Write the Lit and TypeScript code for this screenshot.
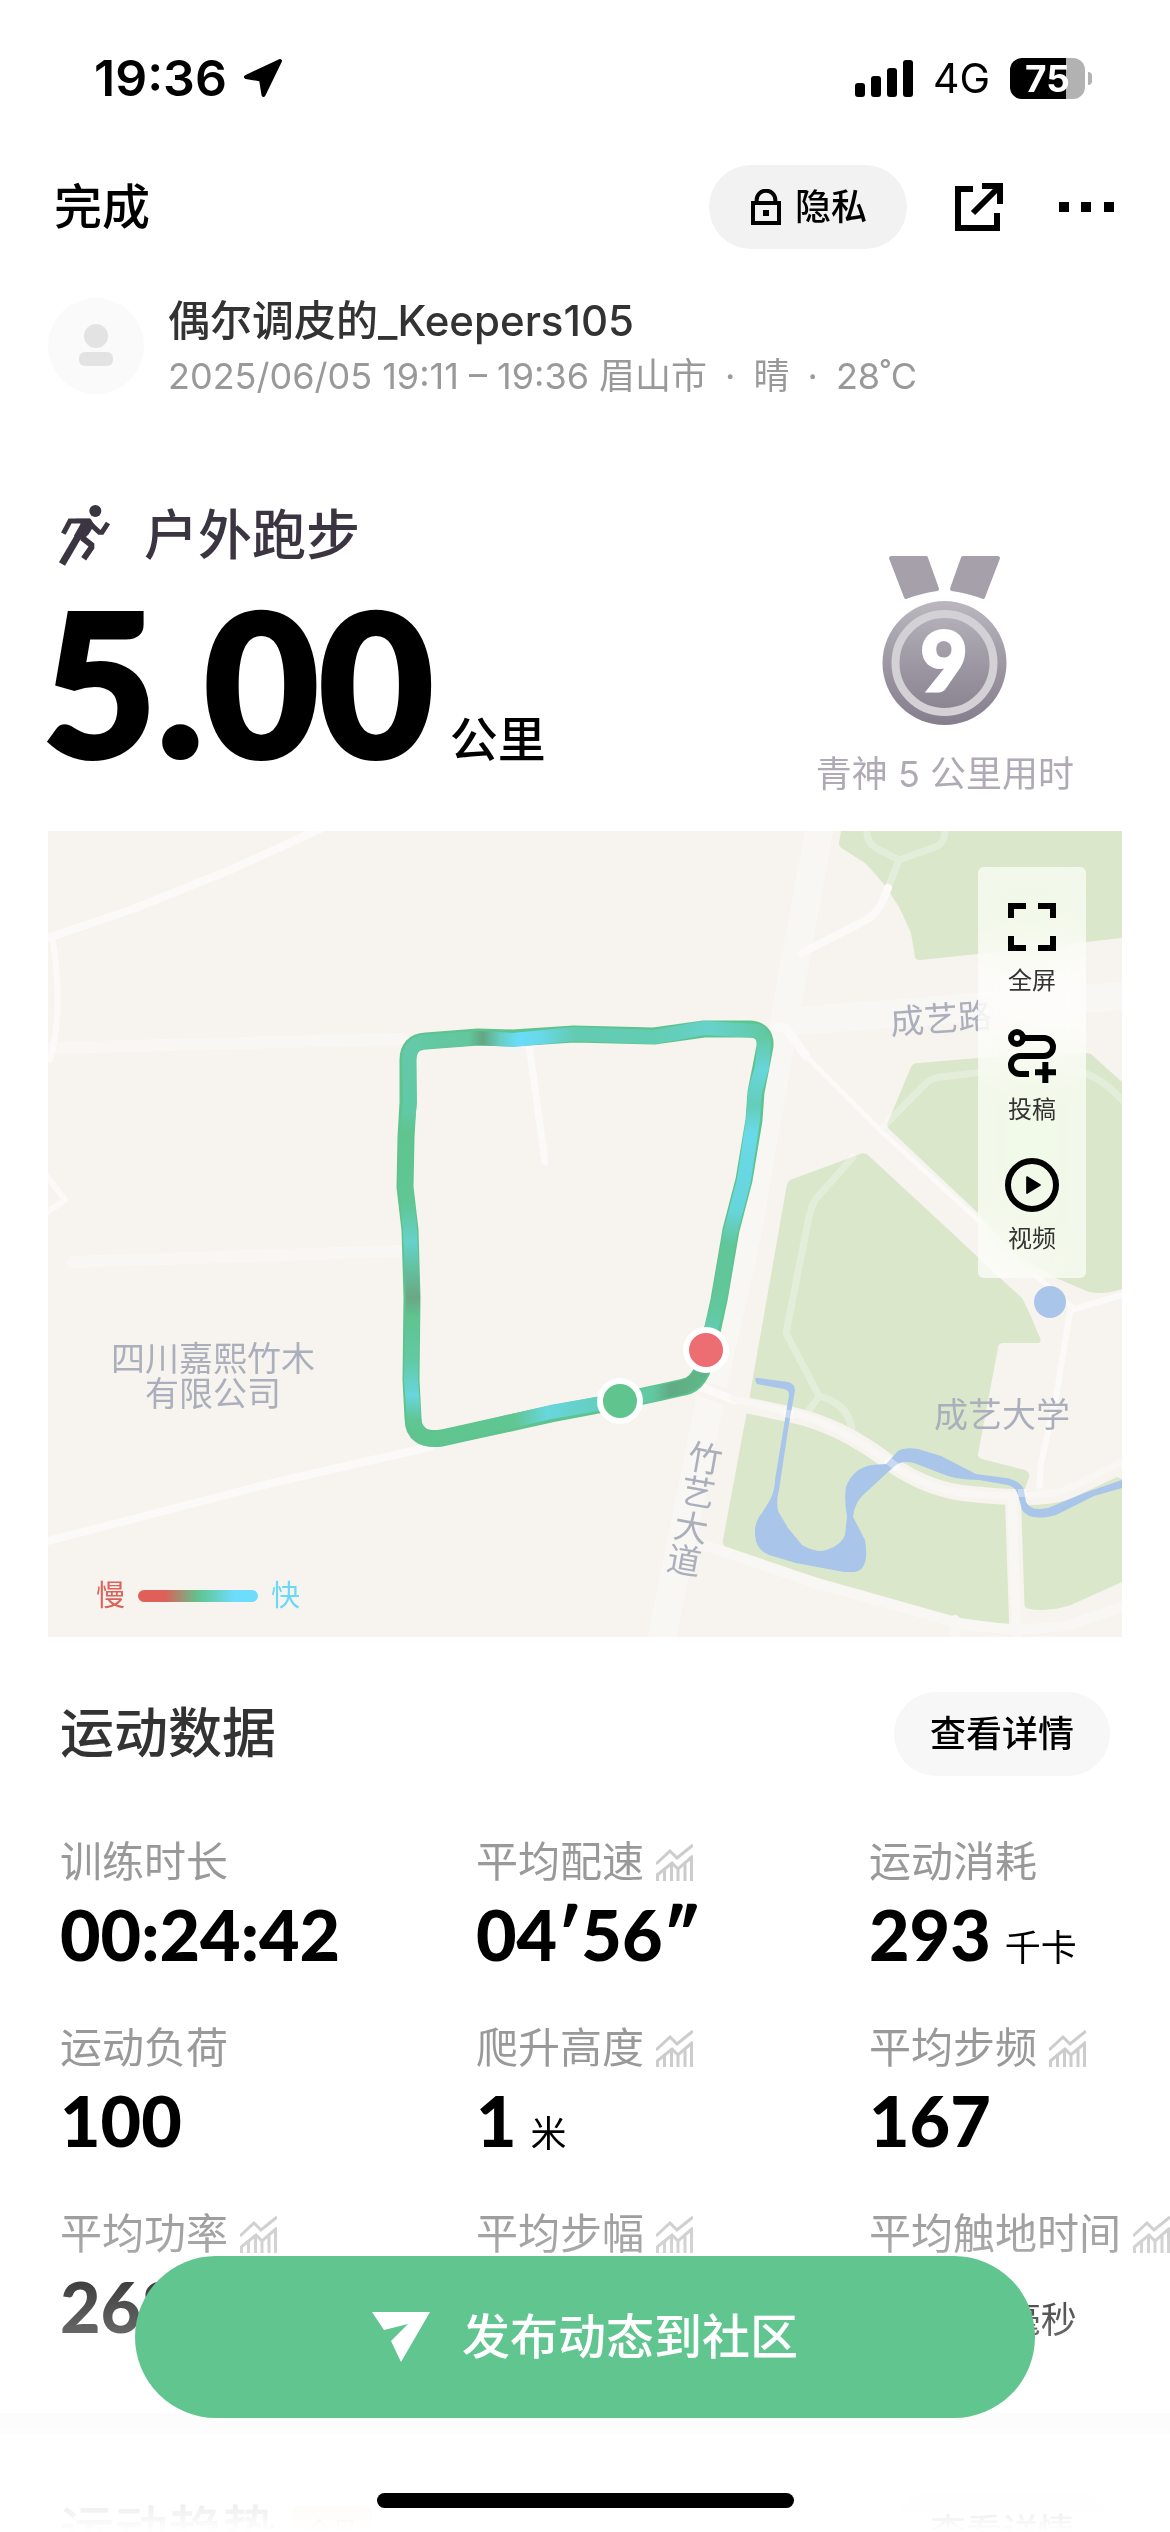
import { LitElement, html, css, svg, nothing } from "lit";
import { customElement } from "lit/decorators.js";

interface Stat {
  label: string;
  value: string;
  unit?: string;
  chart?: boolean;
}

const STATS: Stat[] = [
  { label: "训练时长", value: "00:24:42" },
  { label: "平均配速", value: "04′56″", chart: true },
  { label: "运动消耗", value: "293", unit: "千卡" },
  { label: "运动负荷", value: "100" },
  { label: "爬升高度", value: "1", unit: "米", chart: true },
  { label: "平均步频", value: "167", chart: true },
  { label: "平均功率", value: "268", unit: "瓦", chart: true },
  { label: "平均步幅", value: "1.21", unit: "米", chart: true },
  { label: "平均触地时间", value: "243", unit: "毫秒", chart: true },
];

/* Route map: terrain, roads, water, place names and the coloured track. */
@customElement("route-map")
class RouteMap extends LitElement {
  static styles = css`
    :host {
      display: block;
    }
    .map {
      display: block;
      width: 100%;
      height: auto;
      background: #f7f4ef;
    }
    .green {
      fill: #dae7cb;
    }
    .water {
      fill: #a9c5ea;
    }
    .road,
    .faint,
    .cut,
    .path,
    .track {
      fill: none;
      stroke-linejoin: round;
      stroke-linecap: round;
    }
    .road {
      stroke: #fbfaf8;
    }
    .faint {
      stroke: #f9f7f4;
    }
    .cut {
      stroke: #f7f4ef;
    }
    .path {
      stroke: #ffffff;
      stroke-opacity: 0.28;
      stroke-width: 7px;
    }
    .edge {
      fill: none;
      stroke: #5fc38f;
      stroke-width: 17px;
      stroke-linejoin: round;
      stroke-linecap: round;
    }
    .track {
      stroke-width: 14px;
    }
    .place {
      font-family: "Noto Sans CJK SC", sans-serif;
      font-size: 34px;
      fill: #abafbb;
      text-anchor: middle;
    }
    .pin {
      stroke: #ffffff;
      stroke-width: 6px;
    }
  `;

  render() {
    return html`
      <svg class="map" viewBox="48 831 1074 806" role="img" aria-label="跑步路线地图">
        <defs>
          <linearGradient id="gt" gradientUnits="userSpaceOnUse" x1="408" y1="0" x2="764" y2="0">
            <stop offset="0" stop-color="#63c9a8" />
            <stop offset="0.17" stop-color="#62c79c" />
            <stop offset="0.21" stop-color="#63a783" />
            <stop offset="0.26" stop-color="#66cfc4" />
            <stop offset="0.31" stop-color="#6adcfa" />
            <stop offset="0.37" stop-color="#69d8ea" />
            <stop offset="0.47" stop-color="#63cbb0" />
            <stop offset="0.7" stop-color="#63cdb4" />
            <stop offset="0.85" stop-color="#67d2cc" />
            <stop offset="1" stop-color="#62c9a4" />
          </linearGradient>
          <linearGradient id="gr" gradientUnits="userSpaceOnUse" x1="0" y1="1035" x2="0" y2="1385">
            <stop offset="0" stop-color="#62c8a0" />
            <stop offset="0.1" stop-color="#68d6da" />
            <stop offset="0.2" stop-color="#64cdb9" />
            <stop offset="0.28" stop-color="#69dae8" />
            <stop offset="0.5" stop-color="#67d5dc" />
            <stop offset="0.6" stop-color="#61c698" />
            <stop offset="0.78" stop-color="#61c79c" />
            <stop offset="0.85" stop-color="#63cdb6" />
            <stop offset="1" stop-color="#60ad86" />
          </linearGradient>
          <linearGradient id="gb" gradientUnits="userSpaceOnUse" x1="411" y1="0" x2="706" y2="0">
            <stop offset="0" stop-color="#5fc48e" />
            <stop offset="0.35" stop-color="#60c692" />
            <stop offset="0.46" stop-color="#68d6dc" />
            <stop offset="0.62" stop-color="#65cfc2" />
            <stop offset="0.82" stop-color="#62c8a0" />
            <stop offset="0.88" stop-color="#60ab84" />
            <stop offset="1" stop-color="#60b88a" />
          </linearGradient>
          <linearGradient id="gl" gradientUnits="userSpaceOnUse" x1="0" y1="1045" x2="0" y2="1439">
            <stop offset="0" stop-color="#63c9a8" />
            <stop offset="0.17" stop-color="#62c9a6" />
            <stop offset="0.22" stop-color="#5fc48e" />
            <stop offset="0.4" stop-color="#60c694" />
            <stop offset="0.5" stop-color="#66d2ca" />
            <stop offset="0.57" stop-color="#63c0a0" />
            <stop offset="0.64" stop-color="#6aa785" />
            <stop offset="0.69" stop-color="#5fc490" />
            <stop offset="0.8" stop-color="#62c9a4" />
            <stop offset="0.89" stop-color="#68d6dc" />
            <stop offset="0.95" stop-color="#60c694" />
            <stop offset="1" stop-color="#5fc48e" />
          </linearGradient>
        </defs>

        <path
          class="green"
          d="M841 831L839 843Q839 847 843 849L865 863Q877 875 886 887L899 907L911 933L915 957Q916 960 920 960L978 954L1122 938V831Z"
        />
        <path
          class="green"
          d="M911 1067Q913 1063 918 1063L978 1058L1087 1053L1091 1054L1122 1082V1289Q1105 1295 1089 1292L1056 1278L1010 1250L978 1213L889 1129Q886 1126 888 1122Z"
        />
        <path
          class="green"
          d="M787 1184L790 1180L860 1154Q865 1152 869 1156L949 1230L1000 1278L1022 1298L1030 1314L1040 1338Q1042 1343 1037 1343H1002Q998 1344 998 1348L978 1454Q978 1458 982 1459L1025 1470Q1030 1472 1029 1477L1021 1500L1034 1500Q1062 1499 1090 1487L1117 1477L1122 1479V1582L1071 1605Q1050 1612 1029 1609Q1024 1608 1024 1604L1011 1612V1620Q1011 1625 1005 1624L960 1618L815 1577L727 1547Q722 1546 723 1540L749 1400Z"
        />

        <path class="faint" stroke-width="28" d="M819 831L784 1022L746 1240L712 1390L662 1637" />
        <path class="faint" stroke-width="28" d="M784 1022L978 1007L1122 996" />
        <path class="faint" stroke-width="12" d="M50 1048L402 1039" />
        <path class="faint" stroke-width="12" d="M73 1262L400 1251" />
        <path class="road" stroke-width="8" d="M48 938L133 909L230 870L320 829" />
        <path class="road" stroke-width="6" d="M52 935Q64 1010 50 1060M46 1175L65 1200L46 1213" />
        <path class="road" stroke-width="8" d="M48 1541L133 1519L276 1482L430 1447" />
        <path class="road" stroke-width="7" d="M529 1045L545 1162" />
        <path class="road" stroke-width="8" d="M802 953L868 919Q880 910 884 898L888 888" />
        <path class="path" d="M888 888L899 860L876 848Q866 842 867 831M899 860L938 846Q945 841 945 831" />
        <path class="road" stroke-width="9" d="M776 1027L786 1028L806 1056" />
        <path class="road" stroke-width="5" d="M806 1056L880 1130L978 1220L1020 1262L1071 1306" />
        <path class="path" d="M884 1126L926 1083Q932 1078 941 1077L1000 1070Q1060 1066 1087 1074Q1106 1082 1122 1100" />
        <path class="path" d="M853 1157L815 1200Q810 1210 808 1222L786 1333L819 1396L806 1415M819 1396Q850 1404 852 1432" />
        <path class="road" stroke-width="6" d="M1071 1310L1122 1295M1071 1306L1056 1397L1041 1463L1039 1493" />
        <path
          class="cut"
          stroke-width="16"
          d="M700 1388L723 1396L750 1406L788 1414Q840 1424 891 1464Q930 1491 972 1494Q1045 1502 1070 1490L1122 1466"
        />
        <path class="cut" stroke-width="16" d="M1013 1500L1018 1650" />
        <path class="road" stroke-width="8" d="M696 1385L734 1400" />
        <path class="faint" stroke-width="9" d="M1012 1500L1017 1640" />
        <path
          class="faint"
          stroke-width="7"
          d="M734 1399L788 1412Q840 1424 891 1464Q930 1491 972 1494Q1045 1500 1070 1488L1122 1462"
        />
        <path class="faint" stroke-width="10" d="M704 1545L815 1583L957 1623Q1020 1634 1068 1625L1122 1607M955 1620V1640" />

        <path
          class="water"
          d="M755 1380Q755 1377 758 1378L788 1382Q795 1384 795 1390L788 1430L779 1490Q776 1500 778 1511L788 1528L802 1545Q812 1551 822 1551Q840 1547 845 1535L847 1517Q844 1500 846 1487Q853 1468 872 1465L886 1464L898 1451Q905 1447 918 1449L941 1456L976 1474L1006 1478Q1021 1481 1024 1490L1026 1502Q1031 1510 1040 1509L1048 1508L1087 1492L1122 1480V1488L1094 1496L1056 1515Q1030 1522 1022 1510L1018 1495Q1016 1487 1008 1485L979 1480Q955 1480 940 1473L914 1463Q903 1460 896 1465L888 1472L862 1496Q854 1505 853 1517L865 1540Q870 1570 854 1572L844 1572L796 1563L769 1555Q756 1550 755 1535Q754 1522 762 1513L770 1500Q775 1490 775 1480L789 1395Q789 1390 784 1389L757 1384Z"
        />
        <circle class="water" cx="1050" cy="1302" r="16" />
        <path d="M784 1413L794 1415M886 1459L898 1468M1018 1493L1027 1493" stroke="#ffffff" stroke-opacity="0.35" stroke-width="8" />

        <text class="place" x="213" y="1371">四川嘉熙竹木</text>
        <text class="place" x="213" y="1406">有限公司</text>
        <text class="place" x="1002" y="1427">成艺大学</text>
        <text class="place" x="941" y="1031" transform="rotate(-4 941 1019)">成艺路</text>
        ${[
          ["竹", 705, 1459],
          ["艺", 698, 1493],
          ["大", 691, 1528],
          ["道", 684, 1561],
        ].map(
          ([ch, x, y]) => svg`<text class="place" dy="12" transform="translate(${x} ${y}) rotate(10)">${ch}</text>`,
        )}

        <path
          class="edge"
          d="M408 1060Q408 1042 426 1041L478 1037L513 1038L574 1034L654 1036L704 1029L750 1029Q766 1030 765 1046L761 1067L756 1092L754 1120L744 1180L731 1230L719 1300L708 1350Q702 1384 684 1387L662 1392L620 1401L551 1414L478 1430L442 1438Q413 1442 413 1418L411 1380L412 1297L410 1230L405 1187L406 1137L408 1103Z"
        />
        <path class="track" stroke="url(#gl)" d="M422 1042Q409 1045 409 1060L410 1103L406 1137L406 1187L410 1230L413 1297L411 1380L414 1418Q415 1434 430 1438" />
        <path class="track" stroke="url(#gb)" d="M430 1438Q437 1439 446 1437L478 1429L551 1412L620 1400L662 1392L684 1387Q697 1382 702 1370" />
        <path class="track" stroke="url(#gr)" d="M757 1031Q765 1034 764 1046L762 1067L755 1092L753 1120L744 1180L730 1234L719 1300L708 1340L702 1370" />
        <path class="track" stroke="url(#gt)" d="M422 1042L478 1038L513 1040L574 1034L654 1037L704 1028L757 1031" />
        <circle class="pin" cx="706" cy="1350" r="20" fill="#ec6d72" />
        <circle class="pin" cx="620" cy="1401" r="20" fill="#5fc48e" />
      </svg>
    `;
  }
}

@customElement("app-root")
class AppRoot extends LitElement {
  static styles = css`
    :host {
      display: block;
      font-family: Inter, "Noto Sans CJK SC", sans-serif;
      color: #000000;
    }
    button {
      font: inherit;
      color: inherit;
      background: none;
      border: 0;
      padding: 0;
      margin: 0;
      cursor: pointer;
    }
    svg {
      display: block;
      flex: none;
    }
    .screen {
      position: relative;
      box-sizing: border-box;
      height: 100vh;
      overflow: hidden;
      background: #ffffff;
      padding-top: 48px;
    }
    .status {
      display: flex;
      align-items: center;
      justify-content: space-between;
      height: 60px;
      padding: 0 78px 0 94px;
    }
    .clock {
      display: flex;
      align-items: center;
      gap: 16px;
      font-size: 50px;
      line-height: 60px;
      font-weight: 600;
    }
    .signals {
      display: flex;
      align-items: center;
      gap: 20px;
      font-size: 41px;
      line-height: 60px;
    }
    .battery {
      display: flex;
      align-items: center;
      gap: 3px;
    }
    .cell {
      box-sizing: border-box;
      width: 75px;
      height: 41px;
      border-radius: 12px;
      background: linear-gradient(to right, #000000 75%, #b2b2b2 75%);
      color: #ffffff;
      font-size: 37px;
      line-height: 41px;
      font-weight: 700;
      text-align: center;
    }
    .nub {
      width: 4px;
      height: 13px;
      border-radius: 0 6px 6px 0;
      background: #b2b2b2;
    }
    .nav {
      display: flex;
      align-items: center;
      height: 84px;
      margin-top: 57px;
      padding: 0 56px 0 54px;
    }
    .done {
      margin-right: auto;
      font-size: 48px;
      line-height: 60px;
      font-weight: 500;
    }
    .pill {
      display: flex;
      align-items: center;
      height: 84px;
      border-radius: 42px;
      font-size: 36px;
      line-height: 48px;
      font-weight: 500;
    }
    .privacy {
      gap: 14px;
      padding: 0 40px 0 42px;
      background: #f2f2f2;
    }
    .share {
      margin-left: 48px;
    }
    .more {
      margin-left: 56px;
    }
    .profile {
      display: flex;
      align-items: center;
      gap: 24px;
      margin-top: 49px;
      padding: 0 48px;
      height: 96px;
    }
    .who {
      display: flex;
      flex-direction: column;
      padding-top: 4px;
    }
    .name {
      font-size: 42px;
      line-height: 56px;
      font-weight: 500;
      color: #333333;
    }
    .meta {
      display: flex;
      gap: 18px;
      font-size: 36px;
      line-height: 54px;
      color: #999999;
    }
    .summary {
      display: flex;
      justify-content: space-between;
      margin-top: 110px;
      padding: 0 48px;
      height: 327px;
    }
    .sport {
      display: flex;
      align-items: center;
      gap: 32px;
      margin: 0;
      padding-left: 9px;
      font-size: 54px;
      line-height: 60px;
      font-weight: 500;
      color: #3b3441;
    }
    .distance {
      display: flex;
      align-items: baseline;
      gap: 16px;
      margin: 0 0 0 -6px;
      font-size: 48px;
      font-weight: 500;
      line-height: 228px;
    }
    .km {
      font-family: Lato, sans-serif;
      font-size: 198px;
      font-weight: 900;
      -webkit-text-stroke: 4px #000000;
    }
    .award {
      display: flex;
      flex-direction: column;
      align-items: center;
      gap: 24px;
      padding: 52px 48px 0 0;
      font-size: 36px;
      line-height: 48px;
      color: #b0aab6;
    }
    .digit {
      font-family: Lato, sans-serif;
      font-size: 81px;
      font-weight: 900;
      fill: #ffffff;
      stroke: #ffffff;
      stroke-width: 3px;
      text-anchor: middle;
    }
    .mapbox {
      position: relative;
      margin: 0 48px;
    }
    .tools {
      position: absolute;
      top: 36px;
      right: 36px;
      box-sizing: border-box;
      width: 108px;
      padding: 33px 0 21px;
      display: flex;
      flex-direction: column;
      gap: 30px;
      border-radius: 6px;
      background: rgba(255, 255, 255, 0.68);
      backdrop-filter: blur(24px) saturate(180%);
    }
    .tool {
      display: flex;
      flex-direction: column;
      align-items: center;
      gap: 9px;
      font-size: 24px;
      line-height: 36px;
      color: #333333;
    }
    .legend {
      position: absolute;
      left: 48px;
      bottom: 19px;
      display: flex;
      align-items: center;
      gap: 13px;
      font-size: 29px;
      line-height: 44px;
    }
    .slow {
      color: #df5f59;
    }
    .fast {
      color: #6ad9f7;
    }
    .scale {
      width: 120px;
      height: 12px;
      border-radius: 6px;
      background: linear-gradient(to right, #df5f59 22%, #5fc48e 50%, #6edcfb 80%);
    }
    .head {
      display: flex;
      align-items: center;
      gap: 16px;
      height: 84px;
      margin-top: 55px;
      padding: 0 60px;
    }
    .title {
      margin: 0;
      font-size: 54px;
      line-height: 72px;
      font-weight: 500;
      color: #333333;
    }
    .detail {
      margin-left: auto;
      padding: 0 36px;
      background: #f7f7f7;
    }
    .badge {
      padding: 0 14px;
      border-radius: 8px;
      background: #f8d9b0;
      color: #8a5a20;
      font-size: 26px;
      line-height: 52px;
    }
    .stats {
      display: grid;
      grid-template-columns: 416fr 393fr 301fr;
      row-gap: 48px;
      margin: 56px 0 0;
      padding-left: 60px;
      white-space: nowrap;
    }
    .stat {
      min-width: 0;
    }
    .label {
      display: flex;
      align-items: center;
      gap: 12px;
      font-size: 42px;
      line-height: 60px;
      color: #999999;
    }
    .value {
      display: flex;
      align-items: baseline;
      gap: 14px;
      height: 78px;
      margin: 0;
      font-size: 36px;
      line-height: 84px;
    }
    .number {
      font-family: Lato, sans-serif;
      font-size: 70px;
      font-weight: 900;
    }
    .divider {
      height: 22px;
      margin-top: 71px;
      background: #f7f7f7;
    }
    .dock {
      position: absolute;
      left: 0;
      right: 0;
      bottom: 0;
      box-sizing: border-box;
      height: 332px;
      padding: 56px 135px 24px;
      display: flex;
      flex-direction: column;
      align-items: center;
      justify-content: space-between;
      background: linear-gradient(to bottom, rgba(255, 255, 255, 0), #ffffff);
    }
    .publish {
      display: flex;
      align-items: center;
      justify-content: center;
      gap: 32px;
      width: 100%;
      height: 162px;
      border-radius: 81px;
      background: #60c58f;
      color: #ffffff;
      font-size: 48px;
      line-height: 60px;
      font-weight: 500;
    }
    .home {
      width: 417px;
      height: 15px;
      border-radius: 8px;
      background: #000000;
    }
  `;

  private chartIcon() {
    return html`<svg width="37" height="37" viewBox="0 0 37 37" fill="none" stroke="#cccccc" aria-hidden="true">
      <path d="M0 20L14 7L21 14L37 1" stroke-width="3" />
      <path
        d="M1.500 37V32M8.500 37V26M15.500 37V20M22 37V25M29 37V20M35.500 37V13M0 32L16 19L22 25L37 12"
        stroke-width="3"
      />
    </svg>`;
  }

  private stat(s: Stat) {
    return html`<div class="stat">
      <dt class="label">${s.label}${s.chart ? this.chartIcon() : nothing}</dt>
      <dd class="value"><span class="number">${s.value}</span>${s.unit ? html`<span>${s.unit}</span>` : nothing}</dd>
    </div>`;
  }

  render() {
    return html`
      <div class="screen">
        <div class="status">
          <div class="clock">
            <span>19:36</span>
            <svg width="40" height="40" viewBox="0 0 40 40" aria-hidden="true">
              <path d="M37 3L3 19L18 21.500L20.500 37Z" stroke="#000" stroke-width="4" stroke-linejoin="round" />
            </svg>
          </div>
          <div class="signals">
            <svg width="58" height="37" viewBox="0 0 58 37" aria-hidden="true">
              <rect x="0" y="23" width="10" height="14" rx="3" />
              <rect x="16" y="16" width="10" height="21" rx="3" />
              <rect x="32" y="8" width="10" height="29" rx="3" />
              <rect x="48" y="0" width="10" height="37" rx="3" />
            </svg>
            <span>4G</span>
            <div class="battery"><div class="cell">75</div><div class="nub"></div></div>
          </div>
        </div>

        <nav class="nav">
          <button class="done">完成</button>
          <button class="pill privacy">
            <svg width="30" height="36" viewBox="180 447 90 108" fill="none" stroke="#000" stroke-width="12" aria-hidden="true">
              <rect x="186" y="489" width="78" height="60" />
              <path d="M197 486V480A28 28 0 0 1 253 480V486" />
              <rect x="216" y="510" width="18" height="18" fill="#000" stroke="none" />
            </svg>
            隐私
          </button>
          <button class="share" aria-label="分享">
            <svg width="48" height="48" viewBox="0 0 48 48" fill="none" stroke="#000" stroke-width="6">
              <path d="M18 6H3V45H42V30M27 3H45V21M18 30L44 4" />
            </svg>
          </button>
          <button class="more" aria-label="更多">
            <svg width="55" height="10" viewBox="0 0 55 10">
              <rect width="10" height="10" /><rect x="22" width="10" height="10" /><rect x="45" width="10" height="10" />
            </svg>
          </button>
        </nav>

        <section class="profile">
          <svg width="96" height="96" viewBox="0 0 96 96" aria-hidden="true">
            <circle cx="48" cy="48" r="48" fill="#fafafa" />
            <circle cx="48" cy="38" r="12" fill="#e3e3e3" />
            <rect x="31" y="54" width="34" height="14" rx="6" fill="#e3e3e3" />
          </svg>
          <div class="who">
            <span class="name">偶尔调皮的_Keepers105</span>
            <span class="meta">
              <span>2025/06/05 19:11 – 19:36 眉山市</span><span>·</span><span>晴</span><span>·</span><span>28˚C</span>
            </span>
          </div>
        </section>

        <section class="summary">
          <div>
            <h1 class="sport">
              <svg width="55" height="63" viewBox="51 37 165 189" fill="none" stroke="#3b3441" aria-hidden="true">
                <circle cx="166" cy="58" r="18" fill="#3b3441" stroke="none" />
                <path d="M70 126L90 88H150" stroke-width="15" />
                <path d="M146 92L178 122H186L204 94" stroke-width="15" />
                <path d="M66 217L124 118" stroke-width="21" />
                <path d="M126 138L154 160V168L131 201" stroke-width="18" />
                <path d="M108 81H152L163 100L146 128L128 146L102 132L122 96Z" fill="#3b3441" stroke="none" />
              </svg>
              户外跑步
            </h1>
            <p class="distance"><span class="km">5.00</span><span>公里</span></p>
          </div>
          <div class="award">
            <svg width="125" height="170" viewBox="0 0 125 170" role="img" aria-label="第 9 名奖牌">
              <defs>
                <linearGradient id="disc" x1="0" y1="0" x2="0" y2="1">
                  <stop offset="0" stop-color="#bab7bf" />
                  <stop offset="0.5" stop-color="#9d98a3" />
                  <stop offset="1" stop-color="#857e8d" />
                </linearGradient>
              </defs>
              <path
                d="M9 2H44L55 33Q36 36 24 41Z M116 2H81L70 33Q89 36 101 41Z"
                fill="#a5a0a9" stroke="#a5a0a9" stroke-width="4" stroke-linejoin="round"
              />
              <circle cx="62.500" cy="107" r="62" fill="url(#disc)" />
              <circle cx="62.500" cy="107" r="49" fill="none" stroke="#d4d1d6" stroke-width="8" />
              <text class="digit" x="62" y="135">9</text>
            </svg>
            <span>青神 5 公里用时</span>
          </div>
        </section>

        <section class="mapbox">
          <route-map></route-map>
          <div class="tools">
            <button class="tool">
              <svg width="54" height="54" viewBox="135 150 162 162" fill="none" stroke="#000" stroke-width="18">
                <path d="M153 204V168H198M234 168H279V204M279 258V294H234M198 294H153V258" />
              </svg>
              全屏
            </button>
            <button class="tool">
              <svg width="54" height="54" viewBox="135 537 162 162" fill="none" stroke="#000" stroke-width="18">
                <circle cx="171" cy="564" r="18" />
                <path d="M190 564H252A27 27 0 0 1 252 618H180A27 27 0 0 0 180 672H207M225 667H288M256 636V699" />
              </svg>
              投稿
            </button>
            <button class="tool">
              <svg width="54" height="54" viewBox="135 924 162 162">
                <circle cx="216" cy="1005" r="72" fill="none" stroke="#000" stroke-width="18" />
                <path d="M201 981L240 1005L201 1029Z" stroke="#000" stroke-width="5" stroke-linejoin="round" />
              </svg>
              视频
            </button>
          </div>
          <div class="legend"><span class="slow">慢</span><span class="scale"></span><span class="fast">快</span></div>
        </section>

        <section>
          <div class="head">
            <h2 class="title">运动数据</h2>
            <button class="pill detail">查看详情</button>
          </div>
          <dl class="stats">${STATS.map((s) => this.stat(s))}</dl>
        </section>
        <div class="divider"></div>
        <section>
          <div class="head">
            <h2 class="title">运动趋势</h2>
            <span class="badge">会员</span>
            <button class="pill detail">查看详情</button>
          </div>
        </section>

        <div class="dock">
          <button class="publish">
            <svg width="58" height="50" viewBox="0 0 58 50" aria-hidden="true">
              <path d="M0 0H58L29 50L19 29L36 12L12 18Z" fill="#fff" />
            </svg>
            发布动态到社区
          </button>
          <div class="home"></div>
        </div>
      </div>
    `;
  }
}
